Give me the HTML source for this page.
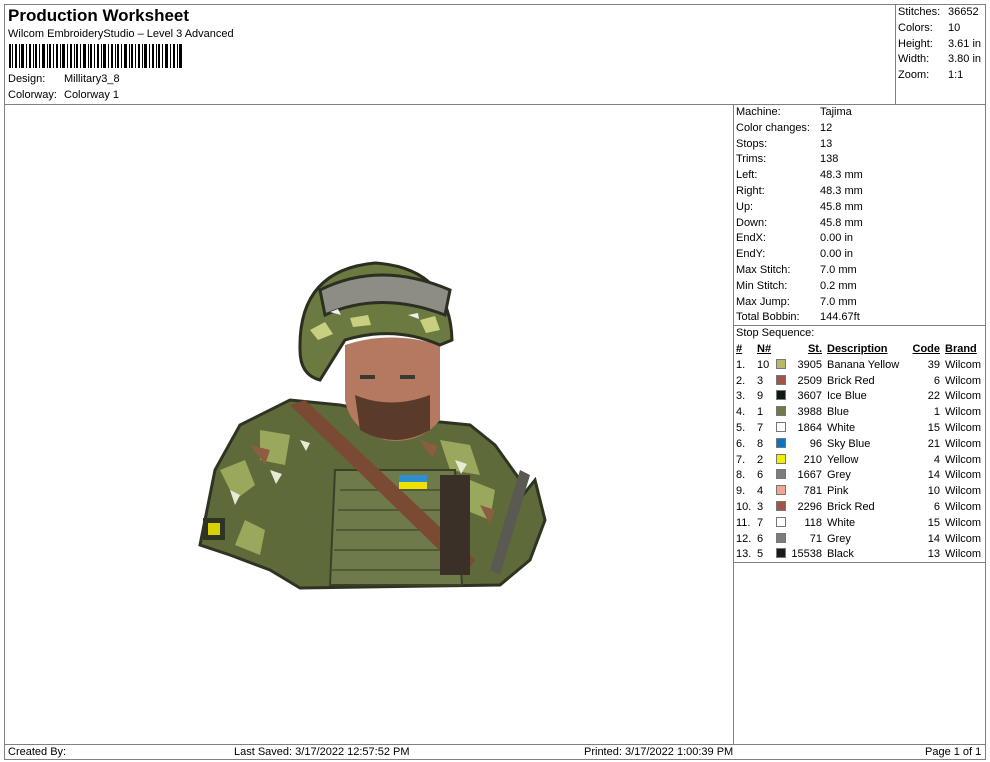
<!DOCTYPE html>
<html><head><meta charset="utf-8"><style>
*{margin:0;padding:0;box-sizing:border-box}
body{width:990px;height:762px;background:#fff;font-family:"Liberation Sans",Arial,sans-serif;font-size:11px;color:#000;position:relative;overflow:hidden}
.a{position:absolute;white-space:nowrap}
.l{position:absolute;background:#808080}
.sw{position:absolute;width:10px;height:10px;border:1px solid #777}
</style></head><body>
<div class="l" style="left:4px;top:4px;width:982px;height:1px"></div>
<div class="l" style="left:4px;top:4px;width:1px;height:756px"></div>
<div class="l" style="left:985px;top:4px;width:1px;height:756px"></div>
<div class="l" style="left:4px;top:759px;width:982px;height:1px"></div>
<div class="l" style="left:4px;top:104px;width:982px;height:1px"></div>
<div class="l" style="left:895px;top:4px;width:1px;height:100px"></div>
<div class="l" style="left:733px;top:104px;width:1px;height:640px"></div>
<div class="l" style="left:4px;top:744px;width:982px;height:1px"></div>
<div class="l" style="left:733px;top:325px;width:253px;height:1px"></div>
<div class="l" style="left:733px;top:562px;width:253px;height:1px"></div>

<div class="a" style="left:8px;top:6px;font-size:17px;font-weight:bold">Production Worksheet</div>
<div class="a" style="left:8px;top:28px">Wilcom EmbroideryStudio – Level 3 Advanced</div>
<svg class="a" style="left:9px;top:44px" width="175" height="24">
<g fill="#000">
<rect x="0" y="0" width="2" height="24"/><rect x="3" y="0" width="1" height="24"/><rect x="6" y="0" width="2" height="24"/><rect x="10" y="0" width="1" height="24"/><rect x="12" y="0" width="3" height="24"/><rect x="17" y="0" width="1" height="24"/><rect x="20" y="0" width="2" height="24"/><rect x="24" y="0" width="1" height="24"/><rect x="26" y="0" width="2" height="24"/><rect x="30" y="0" width="1" height="24"/><rect x="33" y="0" width="3" height="24"/><rect x="38" y="0" width="1" height="24"/><rect x="40" y="0" width="2" height="24"/><rect x="44" y="0" width="1" height="24"/><rect x="47" y="0" width="2" height="24"/><rect x="51" y="0" width="1" height="24"/><rect x="53" y="0" width="3" height="24"/><rect x="58" y="0" width="1" height="24"/><rect x="61" y="0" width="2" height="24"/><rect x="65" y="0" width="1" height="24"/><rect x="67" y="0" width="2" height="24"/><rect x="71" y="0" width="1" height="24"/><rect x="74" y="0" width="3" height="24"/><rect x="79" y="0" width="1" height="24"/><rect x="81" y="0" width="2" height="24"/><rect x="85" y="0" width="1" height="24"/><rect x="88" y="0" width="2" height="24"/><rect x="92" y="0" width="1" height="24"/><rect x="94" y="0" width="3" height="24"/><rect x="99" y="0" width="1" height="24"/><rect x="102" y="0" width="2" height="24"/><rect x="106" y="0" width="1" height="24"/><rect x="108" y="0" width="2" height="24"/><rect x="112" y="0" width="1" height="24"/><rect x="115" y="0" width="3" height="24"/><rect x="120" y="0" width="1" height="24"/><rect x="122" y="0" width="2" height="24"/><rect x="126" y="0" width="1" height="24"/><rect x="129" y="0" width="2" height="24"/><rect x="133" y="0" width="1" height="24"/><rect x="135" y="0" width="3" height="24"/><rect x="140" y="0" width="1" height="24"/><rect x="143" y="0" width="2" height="24"/><rect x="147" y="0" width="1" height="24"/><rect x="149" y="0" width="2" height="24"/><rect x="153" y="0" width="1" height="24"/><rect x="156" y="0" width="3" height="24"/><rect x="161" y="0" width="1" height="24"/><rect x="164" y="0" width="2" height="24"/><rect x="168" y="0" width="1" height="24"/><rect x="170" y="0" width="3" height="24"/>
</g></svg>
<div class="a" style="left:8px;top:73px">Design:</div><div class="a" style="left:64px;top:73px">Millitary3_8</div>
<div class="a" style="left:8px;top:89px">Colorway:</div><div class="a" style="left:64px;top:89px">Colorway 1</div>

<div class="a" style="left:898px;top:6px">Stitches:</div><div class="a" style="left:948px;top:6px">36652</div>
<div class="a" style="left:898px;top:22px">Colors:</div><div class="a" style="left:948px;top:22px">10</div>
<div class="a" style="left:898px;top:38px">Height:</div><div class="a" style="left:948px;top:38px">3.61 in</div>
<div class="a" style="left:898px;top:53px">Width:</div><div class="a" style="left:948px;top:53px">3.80 in</div>
<div class="a" style="left:898px;top:69px">Zoom:</div><div class="a" style="left:948px;top:69px">1:1</div>

<div style="position:absolute;left:736px;top:105px;line-height:15.8px">
Machine:<br>Color changes:<br>Stops:<br>Trims:<br>Left:<br>Right:<br>Up:<br>Down:<br>EndX:<br>EndY:<br>Max Stitch:<br>Min Stitch:<br>Max Jump:<br>Total Bobbin:<br>Stop Sequence:</div>
<div style="position:absolute;left:820px;top:105px;line-height:15.8px">
Tajima<br>12<br>13<br>138<br>48.3 mm<br>48.3 mm<br>45.8 mm<br>45.8 mm<br>0.00 in<br>0.00 in<br>7.0 mm<br>0.2 mm<br>7.0 mm<br>144.67ft</div>

<div style="position:absolute;left:736px;top:342px;line-height:15.8px">
<u><b>#</b></u><br>1.<br>2.<br>3.<br>4.<br>5.<br>6.<br>7.<br>8.<br>9.<br>10.<br>11.<br>12.<br>13.</div>
<div style="position:absolute;left:757px;top:342px;line-height:15.8px">
<u><b>N#</b></u><br>10<br>3<br>9<br>1<br>7<br>8<br>2<br>6<br>4<br>3<br>7<br>6<br>5</div>
<div style="position:absolute;left:780px;width:42px;top:342px;line-height:15.8px;text-align:right">
<u><b>St.</b></u><br>3905<br>2509<br>3607<br>3988<br>1864<br>96<br>210<br>1667<br>781<br>2296<br>118<br>71<br>15538</div>
<div style="position:absolute;left:827px;top:342px;line-height:15.8px">
<u><b>Description</b></u><br>Banana Yellow<br>Brick Red<br>Ice Blue<br>Blue<br>White<br>Sky Blue<br>Yellow<br>Grey<br>Pink<br>Brick Red<br>White<br>Grey<br>Black</div>
<div style="position:absolute;left:900px;width:40px;top:342px;line-height:15.8px;text-align:right">
<u><b>Code</b></u><br>39<br>6<br>22<br>1<br>15<br>21<br>4<br>14<br>10<br>6<br>15<br>14<br>13</div>
<div style="position:absolute;left:945px;top:342px;line-height:15.8px">
<u><b>Brand</b></u><br>Wilcom<br>Wilcom<br>Wilcom<br>Wilcom<br>Wilcom<br>Wilcom<br>Wilcom<br>Wilcom<br>Wilcom<br>Wilcom<br>Wilcom<br>Wilcom<br>Wilcom</div>
<div class="sw" style="left:776px;top:359px;background:#bcb56c"></div>
<div class="sw" style="left:776px;top:375px;background:#a0554a"></div>
<div class="sw" style="left:776px;top:390px;background:#0e1a0e"></div>
<div class="sw" style="left:776px;top:406px;background:#6f7a46"></div>
<div class="sw" style="left:776px;top:422px;background:#fff"></div>
<div class="sw" style="left:776px;top:438px;background:#0c73c2"></div>
<div class="sw" style="left:776px;top:454px;background:#f2ef00"></div>
<div class="sw" style="left:776px;top:469px;background:#7d7d7d"></div>
<div class="sw" style="left:776px;top:485px;background:#f1a592"></div>
<div class="sw" style="left:776px;top:501px;background:#a0554a"></div>
<div class="sw" style="left:776px;top:517px;background:#fff"></div>
<div class="sw" style="left:776px;top:533px;background:#7d7d7d"></div>
<div class="sw" style="left:776px;top:548px;background:#1a1a1a"></div>

<svg class="a" style="left:190px;top:255px" width="360" height="340" viewBox="190 255 360 340">
<path d="M205 520 L215 470 L240 425 L290 400 L340 405 L420 420 L470 425 L495 445 L520 480 L515 505 L535 480 L545 520 L530 560 L500 585 L300 588 L270 570 L230 555 L200 545 Z" fill="#5e6a3a" stroke="#2f3422" stroke-width="3"/>
<path d="M220 470 l25 -10 l10 25 l-20 15 Z M260 430 l30 5 l-5 30 l-25 -5Z M440 440 l30 5 l10 30 l-30 -5Z M470 480 l25 10 l-5 30 l-25 -10Z M245 520 l20 10 l-5 25 l-25 -10Z" fill="#9aa85e"/>
<path d="M230 490 l10 5 l-5 10Z M270 470 l12 4 l-6 10Z M455 460 l12 4 l-6 10Z M300 440 l10 3 l-4 8Z" fill="#e8ead8"/>
<path d="M250 445 l20 5 l-5 15Z M480 505 l15 5 l-5 15Z M420 440 l18 6 l-6 12Z" fill="#8b5e42"/>
<path d="M335 470 L455 470 L462 585 L330 585 Z" fill="#6f7a4a" stroke="#3a4028" stroke-width="2"/>
<path d="M340 490 H455 M338 510 H458 M336 530 H459 M334 550 H460 M332 570 H461" stroke="#4f5a36" stroke-width="2"/>
<path d="M290 405 L305 400 L475 560 L465 575 Z" fill="#7a4a32"/>
<path d="M440 475 l30 0 l0 100 l-30 0 Z" fill="#3b3028"/>
<rect x="399" y="475" width="28" height="7" fill="#2d8fd0"/><rect x="399" y="482" width="28" height="7" fill="#f0e000"/>
<rect x="203" y="518" width="22" height="22" fill="#2f3422"/><path d="M208 523 h12 v12 h-12Z" fill="#d8d000"/>
<path d="M490 570 L520 470 L530 475 L500 575Z" fill="#5a5a52"/>
<path d="M345 345 Q390 330 440 345 L440 420 Q420 445 385 440 Q350 430 345 400 Z" fill="#b57860"/>
<path d="M355 395 Q390 410 430 395 L430 430 Q395 450 360 430Z" fill="#5a3a28"/>
<path d="M360 375 h15 v4 h-15Z M400 375 h15 v4 h-15Z" fill="#3a3a32"/>
<path d="M300 350 Q298 270 375 263 Q450 268 452 340 L440 345 Q395 325 345 340 L320 380 Q300 375 300 350Z" fill="#6b7a40" stroke="#2b2e20" stroke-width="3"/>
<path d="M320 290 Q380 260 450 290 L445 315 Q380 290 325 315Z" fill="#8d8d86" stroke="#2b2e20" stroke-width="3"/>
<path d="M310 330 l15 -8 l8 12 l-15 6Z M420 320 l15 -4 l5 14 l-14 3Z M350 318 l18 -3 l3 10 l-18 2Z" fill="#c8d080"/>
<path d="M330 312 l8 -3 l3 6Z M408 315 l10 -2 l1 6Z" fill="#eeeeea"/>
</svg>

<div class="a" style="left:8px;top:746px">Created By:</div>
<div class="a" style="left:234px;top:746px">Last Saved: 3/17/2022 12:57:52 PM</div>
<div class="a" style="left:584px;top:746px">Printed: 3/17/2022 1:00:39 PM</div>
<div class="a" style="left:925px;top:746px">Page 1 of 1</div>
</body></html>
